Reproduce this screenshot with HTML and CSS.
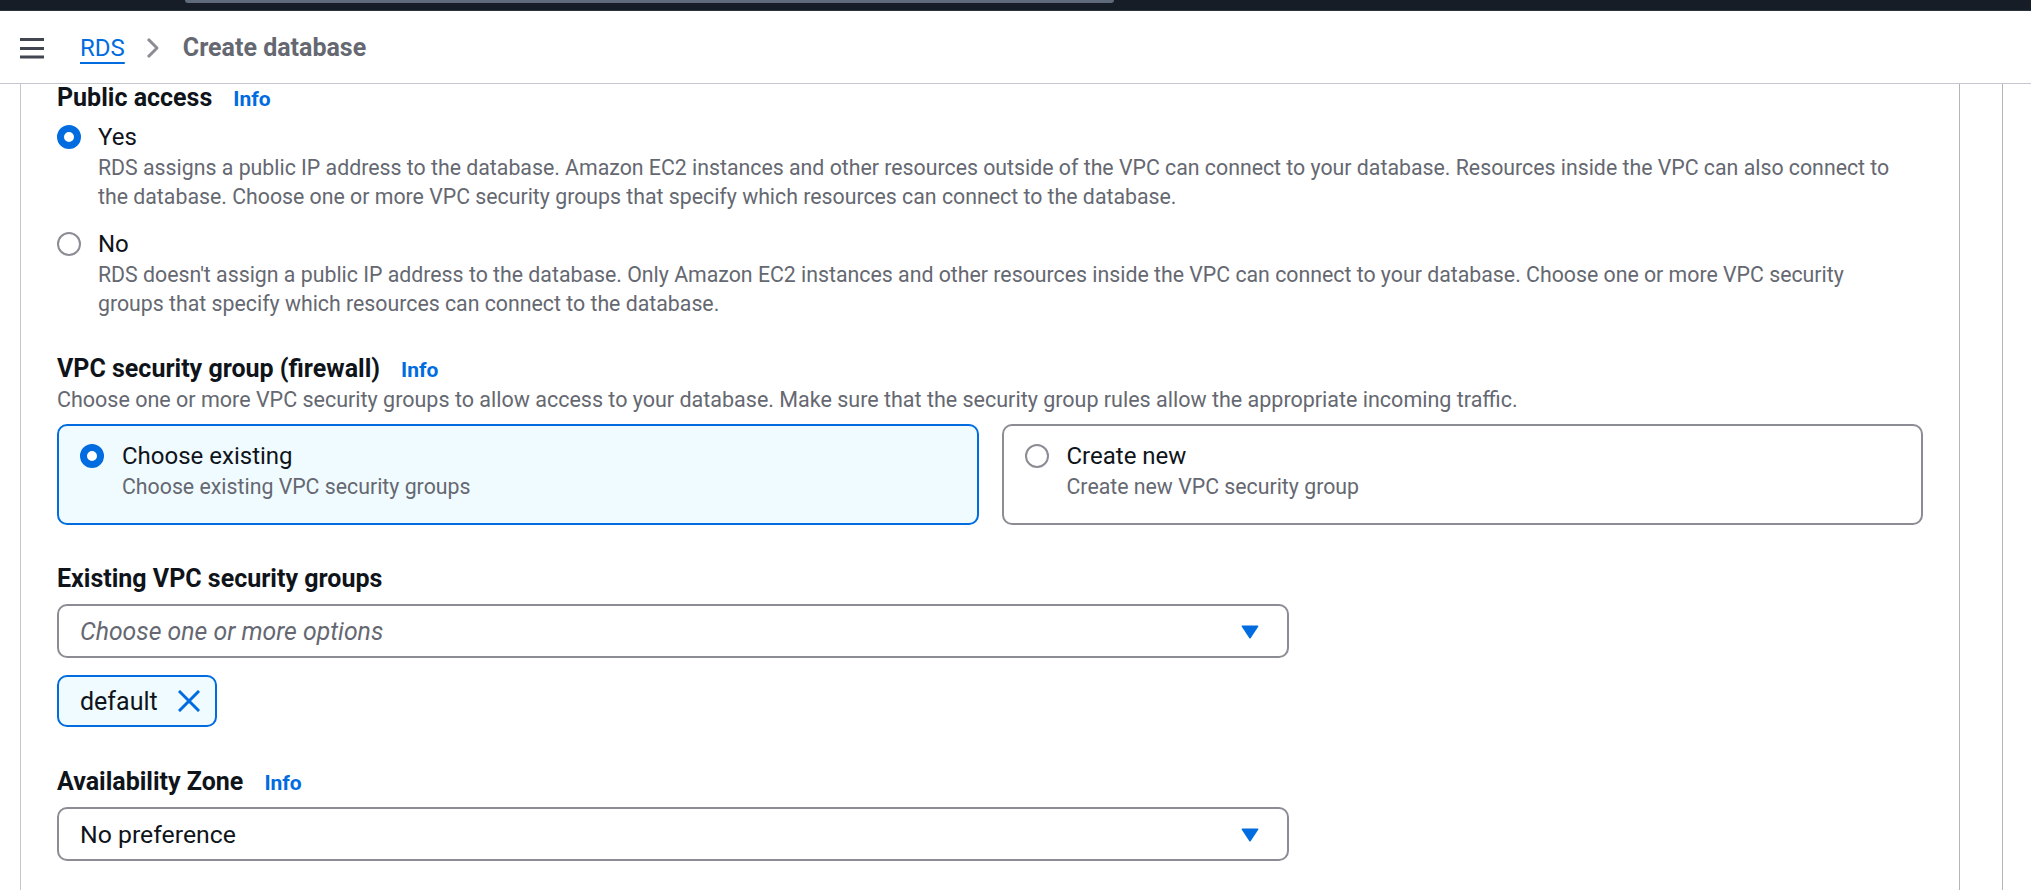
FILE: index.html
```html
<!DOCTYPE html>
<html lang="en">
<head>
<meta charset="utf-8">
<title>Create database - RDS</title>
<link rel="stylesheet" href="styles.css">
</head>
<body>
<div class="topbar"><div class="search-edge"></div></div>
<header class="header">
  <button class="menu-btn" aria-label="Open navigation">
    <svg width="24" height="22" viewBox="0 0 24 22"><rect x="0" y="1" width="24" height="3" fill="#424650"/><rect x="0" y="10" width="24" height="3" fill="#424650"/><rect x="0" y="18.5" width="24" height="3" fill="#424650"/></svg>
  </button>
  <nav class="crumbs">
    <a class="crumb-link" href="#">RDS</a>
    <svg class="crumb-sep" width="14" height="22" viewBox="0 0 14 22"><polyline points="2,2 11,11 2,20" fill="none" stroke="#8c8c94" stroke-width="3" stroke-linejoin="round"/></svg>
    <span class="crumb-current">Create database</span>
  </nav>
</header>
<div class="layout">
  <div class="nav-rail"></div>
  <main class="main">
    <section class="field field-public">
      <div class="label-row"><span class="label">Public access</span><a class="info" href="#">Info</a></div>
      <div class="radio-group">
        <div class="radio-item">
          <span class="radio checked"></span>
          <span class="radio-label">Yes</span>
          <p class="radio-desc">RDS assigns a public IP address to the database. Amazon EC2 instances and other resources outside of the VPC can connect to your database. Resources inside the VPC can also connect to<br>the database. Choose one or more VPC security groups that specify which resources can connect to the database.</p>
        </div>
        <div class="radio-item radio-item-next">
          <span class="radio"></span>
          <span class="radio-label">No</span>
          <p class="radio-desc">RDS doesn't assign a public IP address to the database. Only Amazon EC2 instances and other resources inside the VPC can connect to your database. Choose one or more VPC security<br>groups that specify which resources can connect to the database.</p>
        </div>
      </div>
    </section>

    <section class="field field-gap-l">
      <div class="label-row"><span class="label">VPC security group (firewall)</span><a class="info" href="#">Info</a></div>
      <p class="field-desc">Choose one or more VPC security groups to allow access to your database. Make sure that the security group rules allow the appropriate incoming traffic.</p>
      <div class="tiles">
        <div class="tile tile-selected">
          <span class="radio checked"></span>
          <span class="radio-label">Choose existing</span>
          <span class="tile-desc">Choose existing VPC security groups</span>
        </div>
        <div class="tile">
          <span class="radio"></span>
          <span class="radio-label">Create new</span>
          <span class="tile-desc">Create new VPC security group</span>
        </div>
      </div>
    </section>

    <section class="field field-gap-m">
      <div class="label-row"><span class="label">Existing VPC security groups</span></div>
      <div class="select">
        <span class="select-placeholder">Choose one or more options</span>
        <svg class="caret" width="18" height="14" viewBox="0 0 18 14"><path d="M1.5 0.5 H16.5 Q17.8 0.5 17.2 1.8 L9.6 13.2 Q9 14 8.4 13.2 L0.8 1.8 Q0.2 0.5 1.5 0.5 Z" fill="#006ce0"/></svg>
      </div>
      <div class="token">
        <span class="token-text">default</span>
        <svg class="token-x" width="22" height="22" viewBox="0 0 22 22"><path d="M2 2 L20 20 M20 2 L2 20" stroke="#006ce0" stroke-width="3" stroke-linecap="square"/></svg>
      </div>
    </section>

    <section class="field field-gap-m2">
      <div class="label-row"><span class="label">Availability Zone</span><a class="info" href="#">Info</a></div>
      <div class="select">
        <span class="select-value">No preference</span>
        <svg class="caret" width="18" height="14" viewBox="0 0 18 14"><path d="M1.5 0.5 H16.5 Q17.8 0.5 17.2 1.8 L9.6 13.2 Q9 14 8.4 13.2 L0.8 1.8 Q0.2 0.5 1.5 0.5 Z" fill="#006ce0"/></svg>
      </div>
    </section>
  </main>
  <aside class="tools"></aside>
  <aside class="tools-edge"></aside>
</div>
</body>
</html>
```
FILE: styles.css
```css
* { box-sizing: border-box; }

html, body {
  margin: 0;
  padding: 0;
  height: 891px;
  overflow: hidden;
  background: #ffffff;
  font-family: Roboto, "Open Sans", "Liberation Sans", sans-serif;
  color: #0f141a;
}

.topbar {
  height: 11px;
  background: #161d26;
  border-bottom: 1px solid #2a3340;
}

.search-edge {
  margin-left: 185px;
  width: 929px;
  height: 3px;
  background: #5f6b7a;
  border-bottom-left-radius: 6px;
  border-bottom-right-radius: 6px;
}

.header {
  height: 74px;
  margin-top: -1px;
  border-bottom: 1px solid #c6c6cd;
  display: flex;
  align-items: center;
  padding-left: 20px;
  padding-top: 3px;
}

.menu-btn {
  border: 0;
  background: none;
  padding: 0;
  width: 24px;
  height: 22px;
  display: flex;
  margin-top: -1px;
}

.crumbs {
  display: flex;
  align-items: center;
  margin-left: 36px;
  font-size: 24px;
  line-height: 30px;
}

.crumb-link {
  color: #006ce0;
  text-decoration: underline;
  text-decoration-thickness: 2px;
  text-underline-offset: 6px;
}

.crumb-sep {
  margin-left: 21px;
  margin-right: 23px;
}

.crumb-current {
  color: #656871;
  font-weight: 700;
  font-size: 25px;
}

.layout {
  display: flex;
  height: 806px;
}

.nav-rail {
  width: 21px;
  border-right: 1px solid #c6c6cd;
  flex: none;
}

.main {
  flex: 1;
  padding: 2px 36px 0 36px;
  overflow: hidden;
}

.tools {
  width: 43px;
  flex: none;
  border-left: 1px solid #b4b4bb;
}

.tools-edge {
  width: 29px;
  flex: none;
  border-left: 1px solid #b4b4bb;
}

/* fields */
.field-gap-l { margin-top: 39px; }
.field-gap-m { margin-top: 42px; }
.field-gap-m2 { margin-top: 43px; }

.label-row {
  display: flex;
  align-items: baseline;
  gap: 21px;
  line-height: 24px;
  height: 24px;
}

.label {
  font-size: 25px;
  font-weight: 700;
  color: #0f141a;
}

.info {
  font-size: 21px;
  font-weight: 700;
  color: #006ce0;
  text-decoration: none;
}

.field-desc {
  margin: 5px 0 0 0;
  font-size: 21.5px;
  line-height: 28px;
  color: #656871;
}

/* radio group */
.radio-group { margin-top: 11px; }

.radio-item {
  display: grid;
  grid-template-columns: 24px 1fr;
  column-gap: 17px;
}

.radio-item-next { margin-top: 17px; }

.radio {
  grid-column: 1;
  grid-row: 1;
  width: 24px;
  height: 24px;
  margin-top: 4px;
  border-radius: 50%;
  border: 2px solid #8c8c94;
  background: #ffffff;
}

.radio.checked {
  border: 7px solid #006ce0;
}

.radio-label {
  grid-column: 2;
  grid-row: 1;
  font-size: 24px;
  line-height: 32px;
  color: #0f141a;
}

.radio-desc {
  grid-column: 2;
  grid-row: 2;
  margin: 0;
  font-size: 21.3px;
  line-height: 29px;
  color: #656871;
}

/* tiles */
.tiles {
  margin-top: 10px;
  display: grid;
  grid-template-columns: 1fr 1fr;
  column-gap: 23px;
}

.tile {
  display: grid;
  grid-template-columns: 24px 1fr;
  column-gap: 18px;
  height: 101px;
  padding: 14px 21px 22px 21px;
  border: 2px solid #8c8c94;
  border-radius: 10px;
  background: #ffffff;
}

.tile-selected {
  border-color: #006ce0;
  background: #f0fbff;
}

.tile-desc {
  grid-column: 2;
  grid-row: 2;
  font-size: 21.3px;
  line-height: 29px;
  color: #656871;
}

/* select */
.select {
  margin-top: 13px;
  width: 1232px;
  height: 54px;
  border: 2px solid #8c8c94;
  border-radius: 10px;
  display: flex;
  align-items: center;
  justify-content: space-between;
  padding: 0 28px 0 21px;
  font-size: 24.8px;
}

.select-placeholder {
  font-style: italic;
  color: #656871;
}

.select-value { color: #0f141a; }

.caret { flex: none; margin-top: 1px; }

/* token */
.token {
  margin-top: 17px;
  display: inline-flex;
  align-items: center;
  gap: 20px;
  height: 52px;
  padding: 0 15px 0 21px;
  border: 2px solid #006ce0;
  border-radius: 10px;
  background: #f0fbff;
  font-size: 25px;
  color: #0f141a;
}

.token-x { flex: none; }
```
